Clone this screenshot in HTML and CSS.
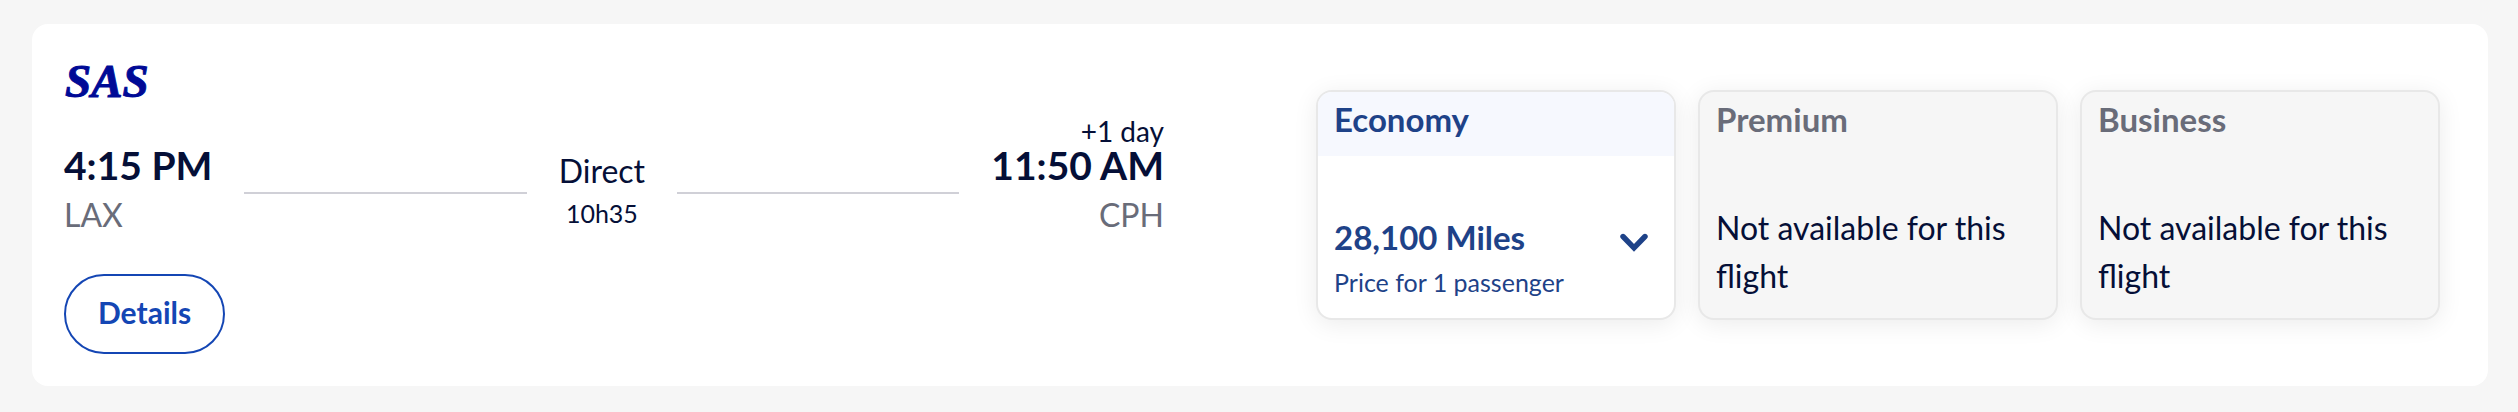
FILE: index.html
```
<!DOCTYPE html>
<html lang="en">
<head>
<meta charset="utf-8">
<meta name="viewport" content="width=device-width, initial-scale=1">
<title>Flight LAX to CPH</title>
<link rel="stylesheet" href="styles.css">
</head>
<body>
<main class="page">
  <article class="flight">
    <section class="trip">
      <svg class="logo" width="88" height="48" viewBox="0 0 88 48" role="img" aria-label="SAS"><text class="logo-text" x="1" y="41">SAS</text></svg>
      <div class="route">
        <div class="stop">
          <span class="time">4:15 PM</span>
          <span class="code">LAX</span>
        </div>
        <span class="line"></span>
        <div class="middle">
          <span class="direct">Direct</span>
          <span class="duration">10h35</span>
        </div>
        <span class="line"></span>
        <div class="stop stop-end">
          <span class="day">+1 day</span>
          <span class="time">11:50 AM</span>
          <span class="code">CPH</span>
        </div>
      </div>
      <button class="details" type="button">Details</button>
    </section>
    <section class="fares">
      <button class="fare fare-open" type="button">
        <span class="fare-name">Economy</span>
        <span class="fare-body">
          <span class="price-group">
            <span class="price">28,100 Miles</span>
            <span class="price-note">Price for 1 passenger</span>
          </span>
          <svg class="chevron" width="28" height="20" viewBox="0 0 28 20" aria-hidden="true"><path d="M3 3.5 14 14.8 25 3.5" fill="none" stroke="currentColor" stroke-width="5.4" stroke-linecap="round" stroke-linejoin="miter"/></svg>
        </span>
      </button>
      <div class="fare">
        <span class="fare-name">Premium</span>
        <p class="unavailable">Not available for this flight</p>
      </div>
      <div class="fare">
        <span class="fare-name">Business</span>
        <p class="unavailable">Not available for this flight</p>
      </div>
    </section>
  </article>
</main>
</body>
</html>
```
FILE: styles.css
```
* { box-sizing: border-box; }

body {
  margin: 0;
  background: #f6f6f6;
  color: #050f37;
  font-family: Lato, "Open Sans", sans-serif;
}

.page { padding: 24px 30px 26px 32px; }

.flight {
  display: grid;
  grid-template-columns: 1100fr 1124fr;
  column-gap: 152px;
  align-items: center;
  padding: 32px 48px 32px 32px;
  border-radius: 16px;
  background: #fff;
}

.trip {
  display: flex;
  flex-direction: column;
  align-items: flex-start;
}

.logo { display: block; overflow: visible; }

.logo-text {
  fill: #000a96;
  stroke: #000a96;
  stroke-width: 1px;
  font-family: "Liberation Serif", serif;
  font-size: 47px;
  font-weight: 700;
  font-style: italic;
}

.route {
  display: grid;
  grid-template-columns: auto 1fr auto 1fr auto;
  column-gap: 32px;
  align-items: end;
  width: 100%;
  margin-top: 13px;
}

.stop, .middle { display: flex; flex-direction: column; }
.stop-end { align-items: flex-end; }
.middle { align-items: center; gap: 10px; padding-bottom: 6px; }

.day { font-size: 28px; line-height: 28px; }
.time { font-size: 39px; line-height: 40px; font-weight: 700; }
.code { margin-top: 10px; font-size: 32px; line-height: 40px; color: #696c79; }
.direct { font-size: 32px; line-height: 32px; }
.duration { font-size: 25px; line-height: 32px; }

.line { height: 2px; margin-bottom: 41px; background: #d0d0d7; }

.details {
  height: 80px;
  margin-top: 39px;
  padding: 0 32px 4px;
  border: 2px solid #1446b4;
  border-radius: 40px;
  background: #fff;
  color: #1446b4;
  font: 700 30px/36px Lato, "Open Sans", sans-serif;
}

.fares {
  display: grid;
  grid-template-columns: repeat(3, 1fr);
  gap: 22px;
}

.fare {
  display: flex;
  flex-direction: column;
  min-height: 230px;
  padding: 0;
  overflow: hidden;
  border: 2px solid #e8e8e8;
  border-radius: 16px;
  background: #f6f6f6;
  color: #050f37;
  font-family: inherit;
  text-align: left;
  box-shadow: 0 4px 24px rgba(0, 0, 0, 0.08);
}

.fare-open { background: #fff; color: #1e4288; }

.fare-name {
  height: 64px;
  padding: 7px 16px;
  color: #696c79;
  font-size: 33px;
  line-height: 40px;
  font-weight: 700;
}

.fare-open .fare-name { background: #f6f8fe; color: #1e4288; }

.fare-body {
  display: flex;
  justify-content: space-between;
  align-items: flex-start;
  margin-top: 61px;
  padding: 0 26px 0 16px;
}

.price-group { display: flex; flex-direction: column; gap: 7px; }
.price { font-size: 33px; line-height: 40px; font-weight: 700; }
.price-note { font-size: 25px; line-height: 36px; }
.chevron { margin-top: 16px; }

.unavailable {
  margin: 48px 0 0;
  padding: 0 16px;
  font-size: 32px;
  line-height: 48px;
}
```
